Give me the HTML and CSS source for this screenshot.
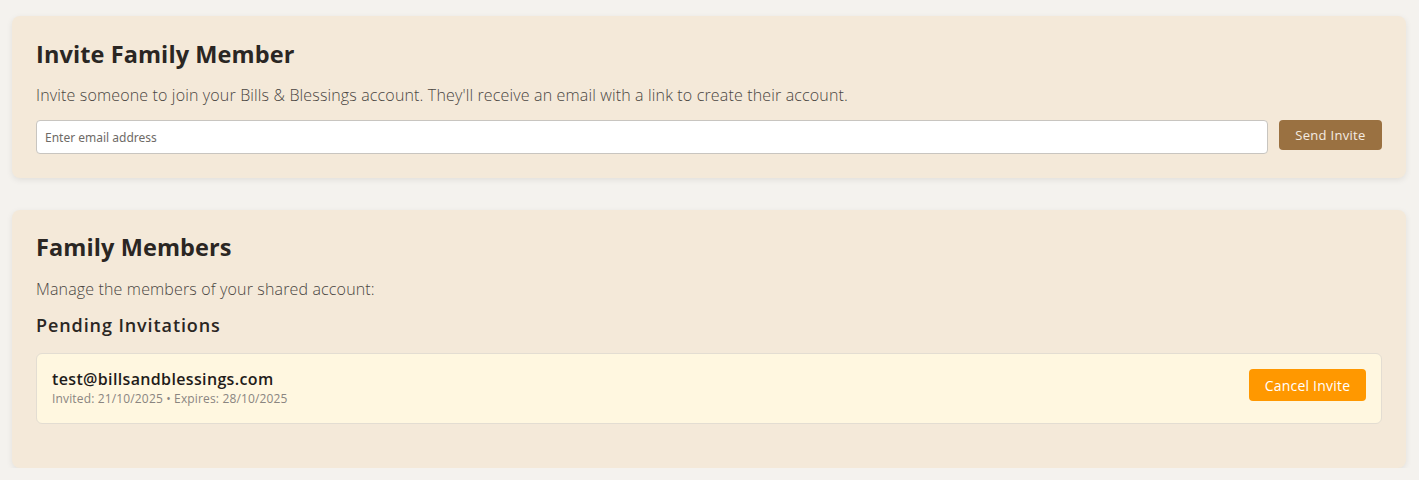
FILE: index.html
```html
<!DOCTYPE html>
<html lang="en">
<head>
<meta charset="utf-8">
<title>Family Members</title>
<link rel="stylesheet" href="styles.css">
</head>
<body>
<main class="page">
  <section class="card card-invite">
    <h2 class="card-title">Invite Family Member</h2>
    <p class="card-text">Invite someone to join your Bills &amp; Blessings account. They'll receive an email with a link to create their account.</p>
    <form class="invite-form">
      <input class="email-input" type="email" placeholder="Enter email address">
      <button class="btn btn-send" type="button">Send Invite</button>
    </form>
  </section>

  <section class="card card-members">
    <h2 class="card-title">Family Members</h2>
    <p class="card-text card-text-members">Manage the members of your shared account:</p>
    <h3 class="sub-title">Pending Invitations</h3>
    <div class="invite-item">
      <div class="invite-info">
        <div class="invite-email">test@billsandblessings.com</div>
        <div class="invite-meta">Invited: 21/10/2025 • Expires: 28/10/2025</div>
      </div>
      <button class="btn btn-cancel" type="button">Cancel Invite</button>
    </div>
  </section>
</main>
</body>
</html>
```
FILE: styles.css
```css
* { box-sizing: border-box; }
html, body { margin: 0; padding: 0; }
body {
  background: #f4f2ee;
  font-family: "Open Sans", "Noto Sans", sans-serif;
  color: #2a2623;
}
.page {
  padding: 16px 13px 0 12px;
  display: flex;
  flex-direction: column;
  gap: 32px;
}
.card {
  background: #f4e9d9;
  border-radius: 8px;
  box-shadow: 0 2px 6px rgba(0,0,0,0.08);
  padding: 23px 24px 24px 24px;
}
.card-invite { padding-top: 24px; }
.card-invite .card-text { margin-top: 17px; }
.card-title {
  margin: 0;
  font-size: 23.5px;
  font-weight: 700;
  line-height: 28px;
  color: #2a2623;
  letter-spacing: 0.1px;
}
.card-text {
  margin: 18px 0 15px;
  font-size: 16px;
  font-weight: 300;
  line-height: 20px;
  color: #4a4642;
  letter-spacing: 0.15px;
}
.card-text-members { margin: 18px 0 12px; }
.invite-form {
  display: flex;
  gap: 11px;
  align-items: flex-start;
}
.email-input {
  flex: 1;
  height: 34px;
  border: 1px solid #c8c5c0;
  border-radius: 4px;
  background: #fff;
  padding: 0 8px;
  font-family: "Noto Sans", sans-serif;
  font-size: 12px;
  color: #333;
}
.email-input::placeholder { color: #6e6a66; }
.btn {
  border: none;
  border-radius: 4px;
  font-family: "Open Sans", "Noto Sans", sans-serif;
  color: #fff;
  cursor: pointer;
}
.btn-send {
  height: 30px;
  width: 103px;
  background: #9a7141;
  font-size: 13px;
  letter-spacing: 0.3px;
  color: #f4ece2;
}
.card-members { padding-bottom: 44px; }
.sub-title {
  margin: 15px 0 17px;
  font-size: 18px;
  font-weight: 600;
  line-height: 22px;
  color: #2a2623;
  letter-spacing: 0.9px;
}
.invite-item {
  display: flex;
  align-items: flex-start;
  justify-content: space-between;
  background: #fff7e0;
  border: 1px solid #e3ddd2;
  border-radius: 6px;
  padding: 15px 15px;
  height: 71px;
}
.invite-email {
  font-size: 16px;
  font-weight: 600;
  line-height: 20px;
  color: #1f1c1a;
  letter-spacing: 0.35px;
}
.invite-meta {
  font-size: 12px;
  color: #8a8580;
  line-height: 14px;
  margin-top: 3px;
  letter-spacing: 0.15px;
}
.btn-cancel {
  height: 32px;
  width: 117px;
  background: #ff9800;
  font-size: 14px;
  letter-spacing: 0.2px;
}
```
